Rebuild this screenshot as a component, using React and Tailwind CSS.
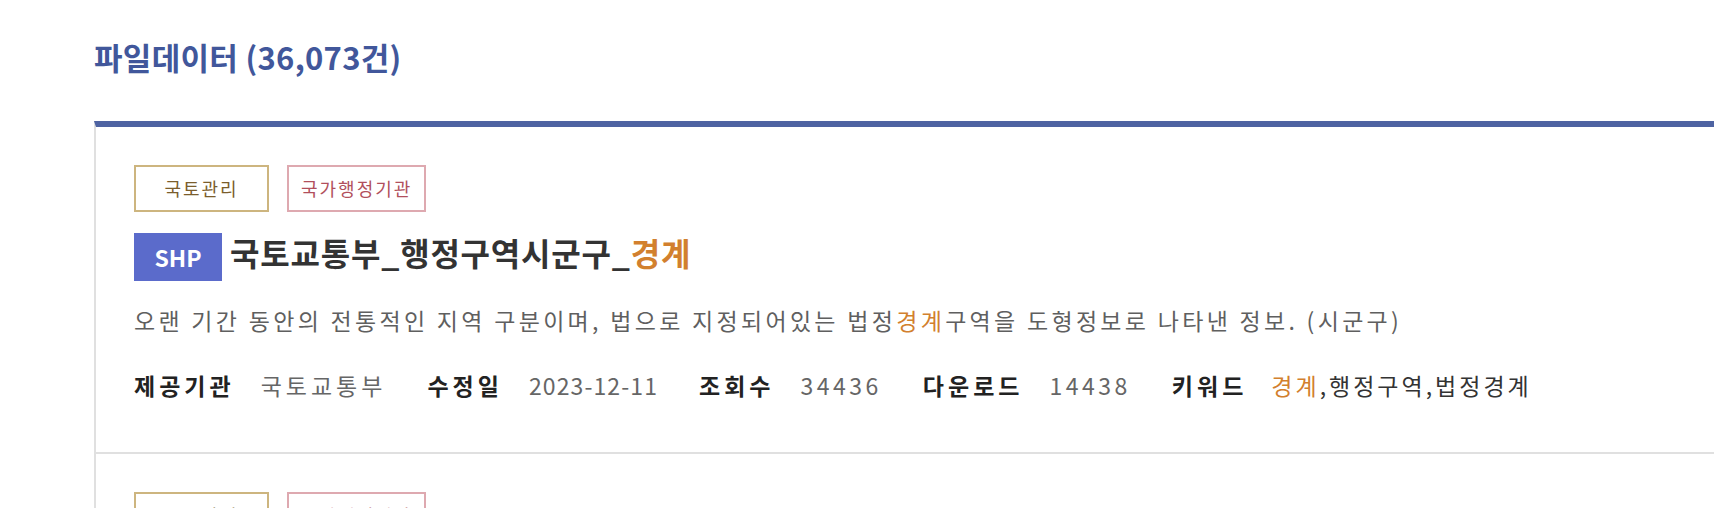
const items = [
  {
    id: 1,
    tags: ['국토관리', '국가행정기관'],
    format: 'SHP',
    title: '국토교통부_행정구역시군구_',
    titleHit: '경계',
    descBefore: '오랜 기간 동안의 전통적인 지역 구분이며, 법으로 지정되어있는 법정',
    descHit: '경계',
    descAfter: '구역을 도형정보로 나타낸 정보. (시군구)',
    org: '국토교통부',
    updated: '2023-12-11',
    views: '34436',
    downloads: '14438',
    keywords: ['행정구역', '법정경계'],
  },
  {
    id: 2,
    tags: ['국토관리', '국가행정기관'],
    format: 'SHP',
    title: '국토교통부_행정구역읍면동_',
    titleHit: '경계',
    descBefore: '오랜 기간 동안의 전통적인 지역 구분이며, 법으로 지정되어있는 법정',
    descHit: '경계',
    descAfter: '구역을 도형정보로 나타낸 정보. (읍면동)',
    org: '국토교통부',
    updated: '2023-12-11',
    views: '21873',
    downloads: '9120',
    keywords: ['행정구역', '법정경계'],
  },
];

function MetaItem({ label, tight, children }) {
  return (
    <div className="flex items-center mr-[41px]">
      <span className="font-bold text-[#222] mr-[26px] tracking-[4px]">{label}</span>
      <span className={`text-[#666] ${tight ? 'tracking-[1.1px]' : 'tracking-[3.5px]'}`}>{children}</span>
    </div>
  );
}

function DataItem({ item, last }) {
  return (
    <li className={`pl-[38px] pt-[38px] pb-[52px] ${last ? '' : 'border-b-2 border-[#e0e0e0]'}`}>
      {/* 분류 태그 */}
      <div className="flex gap-[18px] text-[18px] tracking-[2px]">
        <span className="h-[47px] min-w-[135px] px-[12px] flex items-center justify-center border-2 border-[#cdb57f] text-[#7b5d2c]">
          {item.tags[0]}
        </span>
        <span className="h-[47px] min-w-[135px] px-[12px] flex items-center justify-center border-2 border-[#dea9b0] text-[#b14f5c]">
          {item.tags[1]}
        </span>
      </div>

      {/* 제목 */}
      <div className="mt-[21px] h-[48px] flex items-center">
        <span className="w-[88px] h-[48px] flex items-center justify-center bg-[#5b6bcb] text-white font-bold text-[23px]">
          {item.format}
        </span>
        <a href="#" className="block ml-[8px] pb-[10px] text-[32px] font-bold text-[#333] tracking-[0.8px] leading-none">
          {item.title}
          <span className="text-[#d2802e]">{item.titleHit}</span>
        </a>
      </div>

      {/* 설명 */}
      <p className="mt-[24px] text-[23px] leading-[30px] tracking-[3.3px] text-[#5f5f5f]">
        {item.descBefore}
        <span className="text-[#d2802e]">{item.descHit}</span>
        {item.descAfter}
      </p>

      {/* 메타 정보 */}
      <div className="mt-[35px] flex items-center text-[23px] leading-[30px]">
        <MetaItem label="제공기관">
          <span className="tracking-[4px]">{item.org}</span>
        </MetaItem>
        <MetaItem label="수정일" tight>{item.updated}</MetaItem>
        <MetaItem label="조회수">{item.views}</MetaItem>
        <MetaItem label="다운로드">{item.downloads}</MetaItem>
        <div className="flex items-center">
          <span className="font-bold text-[#222] mr-[24px] tracking-[4px]">키워드</span>
          <span className="text-[#333] tracking-[3px]">
            <span className="text-[#d2802e]">경계</span>
            {item.keywords.map((k) => (
              <span key={k}>,{k}</span>
            ))}
          </span>
        </div>
      </div>
    </li>
  );
}

export default function App() {
  return (
    <div
      className="h-[508px] overflow-hidden bg-white"
      style={{ fontFamily: '"Noto Sans CJK KR", "Noto Sans", sans-serif' }}
    >
      <div className="pl-[94px]">
        <h2 className="pt-[37px] h-[121px] text-[31px] leading-[40px] font-bold text-[#41579b] tracking-[0.3px]">
          파일데이터 (36,073건)
        </h2>

        <ul className="border-t-[6px] border-[#4e63a2] border-l-2 border-l-[#e0e0e0]">
          {items.map((item, i) => (
            <DataItem key={item.id} item={item} last={i === items.length - 1} />
          ))}
        </ul>
      </div>
    </div>
  );
}
